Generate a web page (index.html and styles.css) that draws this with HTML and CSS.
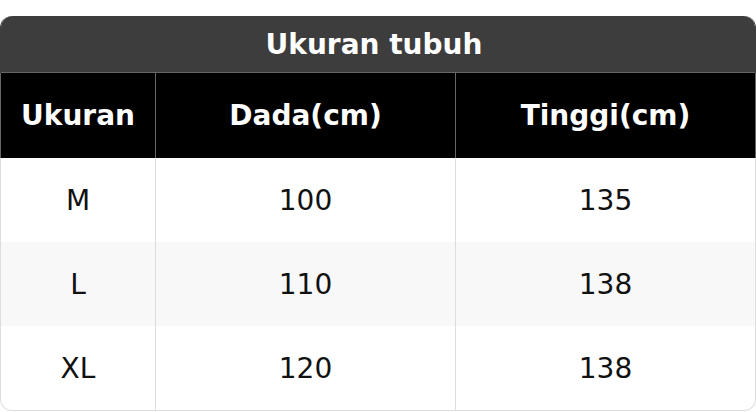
FILE: index.html
```html
<!DOCTYPE html>
<html>
<head>
<meta charset="utf-8">
<link rel="stylesheet" href="styles.css">
</head>
<body>
<div class="card">
  <div class="inner">
    <div class="title">Ukuran tubuh</div>
    <table class="size">
      <thead>
        <tr><th class="c1">Ukuran</th><th class="c2">Dada(cm)</th><th class="c3">Tinggi(cm)</th></tr>
      </thead>
      <tbody>
        <tr><td>M</td><td>100</td><td>135</td></tr>
        <tr class="alt"><td>L</td><td>110</td><td>138</td></tr>
        <tr><td>XL</td><td>120</td><td>138</td></tr>
      </tbody>
    </table>
  </div>
</div>
</body>
</html>
```
FILE: styles.css
```css
html, body {
  margin: 0;
  padding: 0;
  background: #ffffff;
}
body {
  padding-top: 16px;
  font-family: "DejaVu Sans", sans-serif;
}
.card {
  width: 756px;
  box-sizing: border-box;
  padding: 0 1px 1px 1px;
  border-radius: 12px;
  background: linear-gradient(to bottom, #3d3d3d 0, #3d3d3d 57px, #666666 57px, #666666 142px, #dddddd 142px);
}
.inner {
  border-radius: 12px 12px 11px 11px;
  overflow: hidden;
  background: #ffffff;
}
.title {
  height: 56px;
  background: #3d3d3d;
  color: #ffffff;
  font-weight: bold;
  font-size: 28px;
  display: flex;
  align-items: center;
  justify-content: center;
  padding-right: 8px;
  border-bottom: 1px solid #666666;
}
.size {
  width: 100%;
  border-collapse: collapse;
  table-layout: fixed;
}
.size th {
  height: 85px;
  background: #000000;
  color: #ffffff;
  font-weight: bold;
  font-size: 28px;
  padding: 0;
  border-left: 1px solid #666666;
}
.size td {
  height: 84px;
  padding: 0;
  text-align: center;
  font-size: 28px;
  color: #111111;
  border-left: 1px solid #dddddd;
}
.size th:first-child, .size td:first-child {
  border-left: none;
}
.c1 { width: 154px; }
.c2 { width: 299px; }
.alt td { background: #f8f8f8; }
```
